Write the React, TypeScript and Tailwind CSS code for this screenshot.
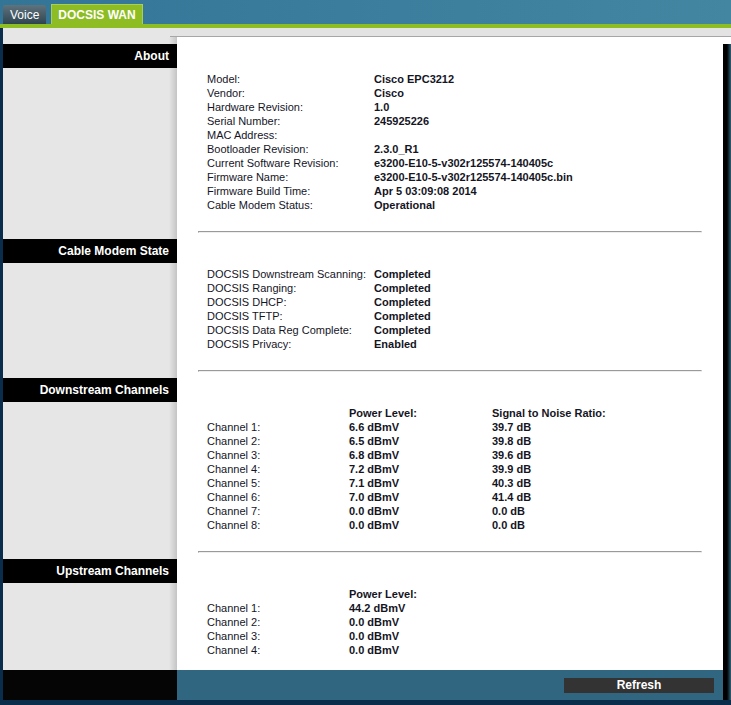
const font = { fontFamily: '"Liberation Sans", Arial, sans-serif' };

const ABOUT = [
  ['Model:', 'Cisco EPC3212'],
  ['Vendor:', 'Cisco'],
  ['Hardware Revision:', '1.0'],
  ['Serial Number:', '245925226'],
  ['MAC Address:', ''],
  ['Bootloader Revision:', '2.3.0_R1'],
  ['Current Software Revision:', 'e3200-E10-5-v302r125574-140405c'],
  ['Firmware Name:', 'e3200-E10-5-v302r125574-140405c.bin'],
  ['Firmware Build Time:', 'Apr 5 03:09:08 2014'],
  ['Cable Modem Status:', 'Operational'],
];

const STATE = [
  ['DOCSIS Downstream Scanning:', 'Completed'],
  ['DOCSIS Ranging:', 'Completed'],
  ['DOCSIS DHCP:', 'Completed'],
  ['DOCSIS TFTP:', 'Completed'],
  ['DOCSIS Data Reg Complete:', 'Completed'],
  ['DOCSIS Privacy:', 'Enabled'],
];

const DOWN = [
  ['6.6 dBmV', '39.7 dB'],
  ['6.5 dBmV', '39.8 dB'],
  ['6.8 dBmV', '39.6 dB'],
  ['7.2 dBmV', '39.9 dB'],
  ['7.1 dBmV', '40.3 dB'],
  ['7.0 dBmV', '41.4 dB'],
  ['0.0 dBmV', '0.0 dB'],
  ['0.0 dBmV', '0.0 dB'],
];

const UP = ['44.2 dBmV', '0.0 dBmV', '0.0 dBmV', '0.0 dBmV'];

function Separator() {
  return (
    <div className="ml-[21px] mr-[21px] h-[2px] border-t border-l border-[#9a9a9a] border-b border-r border-b-[#eeeeee] border-r-[#eeeeee]" />
  );
}

function Section({
  title,
  first,
  pb,
  children,
}: {
  title: string;
  first?: boolean;
  pb: string;
  children: React.ReactNode;
}) {
  return (
    <div className="flex">
      <div className="w-[174px] shrink-0 bg-[linear-gradient(to_right,#e6e6e6_166px,#c4c4c4_174px)]">
        <div
          className={`${first ? 'mt-[7px]' : 'mt-[8px]'} h-[24px] bg-black text-white text-[12px] font-bold flex items-center justify-end pr-[8px]`}
        >
          {title}
        </div>
      </div>
      <div className={`flex-1 bg-white ${pb}`}>
        {first ? <div className="h-[35px]" /> : (
          <>
            <Separator />
            <div className="h-[34px]" />
          </>
        )}
        <div className="pl-[30px] text-[11px] leading-[14px] text-[#15151f]">{children}</div>
      </div>
    </div>
  );
}

function KV({ rows }: { rows: string[][] }) {
  return (
    <>
      {rows.map(([k, v]) => (
        <div className="flex h-[14px]" key={k}>
          <div className="w-[167px]">{k}</div>
          <div className="font-bold">{v}</div>
        </div>
      ))}
    </>
  );
}

export default function App() {
  return (
    <div className="w-[731px] h-[705px] overflow-hidden bg-[#0b2d4c]" style={font}>
      {/* top header */}
      <div className="h-[24px] bg-[linear-gradient(to_right,#327597,#4386a2)] flex items-end pl-[3px] gap-[5px]">
        <div className="h-[19px] px-[7px] flex items-center text-white text-[12px] bg-[linear-gradient(to_bottom,#5f737d,#2e4551)] rounded-t-[2px]">
          Voice
        </div>
        <div className="h-[20px] px-[6px] flex items-center text-white text-[12px] font-bold bg-[#8dbd22] border-t border-l border-r border-[#a9cf55]">
          DOCSIS WAN
        </div>
      </div>
      <div className="h-[4px] bg-[#8dbd22]" />

      <div className="flex h-[672px]">
        <div className="w-[3px] bg-[#0b2d4c]" />
        <div className="w-[720px] flex flex-col">
          <div className="h-[9px] bg-[#e6e6e6] flex">
            <div className="w-[167px]" />
            <div className="flex-1 border-b border-[#a6a6a6] bg-[#e3e3e3]" />
          </div>

          <Section title="About" first pb="pb-[19px]">
            <KV rows={ABOUT} />
          </Section>

          <Section title="Cable Modem State" pb="pb-[19px]">
            <KV rows={STATE} />
          </Section>

          <Section title="Downstream Channels" pb="pb-[19px]">
            <div className="flex h-[14px] font-bold">
              <div className="w-[142px]" />
              <div className="w-[143px]">Power Level:</div>
              <div>Signal to Noise Ratio:</div>
            </div>
            {DOWN.map(([p, s], i) => (
              <div className="flex h-[14px]" key={i}>
                <div className="w-[142px]">Channel {i + 1}:</div>
                <div className="w-[143px] font-bold">{p}</div>
                <div className="font-bold">{s}</div>
              </div>
            ))}
          </Section>

          <Section title="Upstream Channels" pb="pb-[13px]">
            <div className="flex h-[14px] font-bold">
              <div className="w-[142px]" />
              <div>Power Level:</div>
            </div>
            {UP.map((p, i) => (
              <div className="flex h-[14px]" key={i}>
                <div className="w-[142px]">Channel {i + 1}:</div>
                <div className="font-bold">{p}</div>
              </div>
            ))}
          </Section>

          {/* footer */}
          <div className="h-[30px] flex">
            <div className="w-[174px] bg-[#050505]" />
            <div className="flex-1 bg-[#30667f] flex items-start pt-[8px] pl-[387px]">
              <button className="block w-[150px] h-[15px] bg-[#333333] text-white text-[12px] font-bold leading-[15px]">
                Refresh
              </button>
            </div>
          </div>
          <div className="flex-1" />
        </div>
        <div className="w-[8px] flex flex-col">
          <div className="h-[9px] bg-[#e3e3e3] border-b border-[#a6a6a6]" />
          <div className="h-[7px] bg-white" />
          <div className="h-[656px] bg-[linear-gradient(to_right,#000_50%,#2e6079)]" />
        </div>
      </div>
    </div>
  );
}
